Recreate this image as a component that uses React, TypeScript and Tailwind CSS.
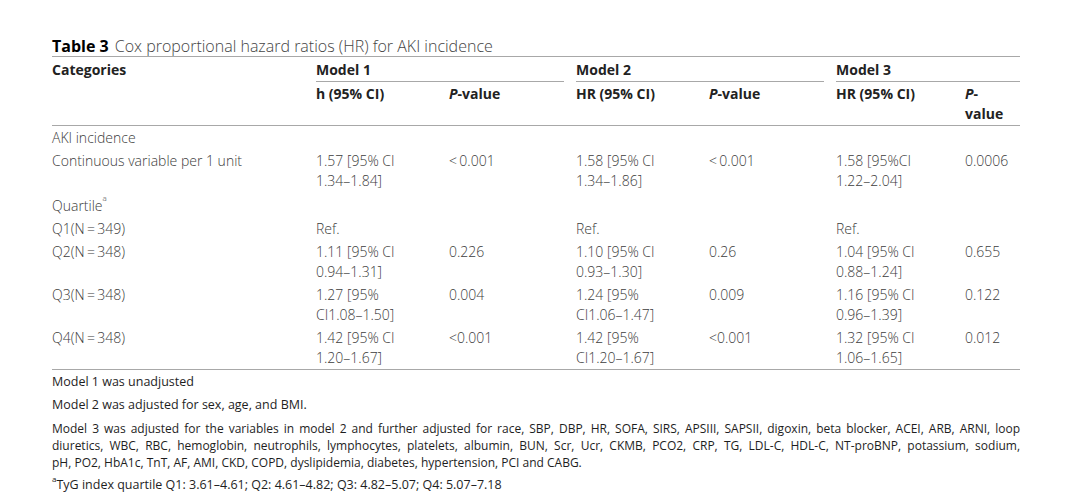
const body = "font-light text-[#3c3c3c]"

type Row = {
  label: React.ReactNode
  cells: React.ReactNode[]
}

const rows: Row[] = [
  { label: 'AKI incidence', cells: ['', '', '', '', '', ''] },
  {
    label: 'Continuous variable per 1 unit',
    cells: [
      <>1.57 [95% CI<br />1.34–1.84]</>,
      '<\u20090.001',
      <>1.58 [95% CI<br />1.34–1.86]</>,
      '<\u20090.001',
      <>1.58 [95%CI<br />1.22–2.04]</>,
      '0.0006',
    ],
  },
  { label: <>Quartile<sup className="text-[8px] align-super">a</sup></>, cells: ['', '', '', '', '', ''] },
  { label: 'Q1(N\u2009=\u2009349)', cells: ['Ref.', '', 'Ref.', '', 'Ref.', ''] },
  {
    label: 'Q2(N\u2009=\u2009348)',
    cells: [
      <>1.11 [95% CI<br />0.94–1.31]</>,
      '0.226',
      <>1.10 [95% CI<br />0.93–1.30]</>,
      '0.26',
      <>1.04 [95% CI<br />0.88–1.24]</>,
      '0.655',
    ],
  },
  {
    label: 'Q3(N\u2009=\u2009348)',
    cells: [
      <>1.27 [95%<br />CI1.08–1.50]</>,
      '0.004',
      <>1.24 [95%<br />CI1.06–1.47]</>,
      '0.009',
      <>1.16 [95% CI<br />0.96–1.39]</>,
      '0.122',
    ],
  },
  {
    label: 'Q4(N\u2009=\u2009348)',
    cells: [
      <>1.42 [95% CI<br />1.20–1.67]</>,
      '<0.001',
      <>1.42 [95%<br />CI1.20–1.67]</>,
      '<0.001',
      <>1.32 [95% CI<br />1.06–1.65]</>,
      '0.012',
    ],
  },
]

function ModelHead({ name, last }: { name: string; last?: boolean }) {
  return (
    <th colSpan={2} className="p-0 text-left align-top font-bold">
      <div className={`border-b border-[#a8a8a8] pt-[3px] pb-[1px] leading-[20px] ${last ? '' : 'mr-[12px]'}`}>
        {name}
      </div>
    </th>
  )
}

const subHead = "p-0 pt-[2px] pb-[1px] text-left align-top font-bold leading-[20px]"

export default function App() {
  return (
    <div className="w-[1080px] h-[504px] bg-white pt-[36px] pl-[52px] font-['Open_Sans',sans-serif]">
      <div className="w-[968px]">
        {/* Caption */}
        <div className="leading-[20px] text-[16px] text-[#222]">
          <span className="font-bold text-black">Table 3</span>
          <span className="font-light text-[#444] ml-[6px]">Cox proportional hazard ratios (HR) for AKI incidence</span>
        </div>

        <table className="table-fixed border-collapse w-[968px] text-[14px] border-t border-b border-[#a8a8a8]">
          <colgroup>
            <col className="w-[264px]" />
            <col className="w-[133px]" />
            <col className="w-[127px]" />
            <col className="w-[133px]" />
            <col className="w-[127px]" />
            <col className="w-[129px]" />
            <col className="w-[55px]" />
          </colgroup>
          <thead className="text-[#222]">
            <tr>
              <th className="p-0 pt-[3px] text-left align-top font-bold leading-[20px]">Categories</th>
              <ModelHead name="Model 1" />
              <ModelHead name="Model 2" />
              <ModelHead name="Model 3" last />
            </tr>
            <tr className="border-b border-[#a8a8a8]">
              <th className="p-0" />
              <th className={subHead}>h (95% CI)</th>
              <th className={subHead}><i>P</i>-value</th>
              <th className={subHead}>HR (95% CI)</th>
              <th className={subHead}><i>P</i>-value</th>
              <th className={subHead}>HR (95% CI)</th>
              <th className={subHead}><i>P</i>-<br />value</th>
            </tr>
          </thead>
          <tbody className={body}>
            {rows.map((r, i) => (
              <tr key={i}>
                <td className={`p-0 pb-[1px] align-top leading-[20px] ${i === 2 ? 'pt-[4px]' : 'pt-[2px]'}`}>{r.label}</td>
                {r.cells.map((c, j) => (
                  <td key={j} className={`p-0 pb-[1px] align-top leading-[20px] ${i === 2 ? 'pt-[4px]' : 'pt-[2px]'}`}>{c}</td>
                ))}
              </tr>
            ))}
          </tbody>
        </table>

        {/* Footnotes */}
        <div className="text-[12.5px] text-[#1e1e1e] leading-[17px] pt-[3px]">
          <p className="mb-[6px]">Model 1 was unadjusted</p>
          <p className="mb-[7px]">Model 2 was adjusted for sex, age, and BMI.</p>
          <div className="mb-[5px] text-[12px]">
            <p className="text-justify [text-align-last:justify]">Model 3 was adjusted for the variables in model 2 and further adjusted for race, SBP, DBP, HR, SOFA, SIRS, APSIII, SAPSII, digoxin, beta blocker, ACEI, ARB, ARNI, loop</p>
            <p className="text-justify [text-align-last:justify]">diuretics, WBC, RBC, hemoglobin, neutrophils, lymphocytes, platelets, albumin, BUN, Scr, Ucr, CKMB, PCO2, CRP, TG, LDL-C, HDL-C, NT-proBNP, potassium, sodium,</p>
            <p>pH, PO2, HbA1c, TnT, AF, AMI, CKD, COPD, dyslipidemia, diabetes, hypertension, PCI and CABG.</p>
          </div>
          <p><sup className="text-[8px] align-[3px]">a</sup>TyG index quartile Q1: 3.61–4.61; Q2: 4.61–4.82; Q3: 4.82–5.07; Q4: 5.07–7.18</p>
        </div>
      </div>
    </div>
  )
}
